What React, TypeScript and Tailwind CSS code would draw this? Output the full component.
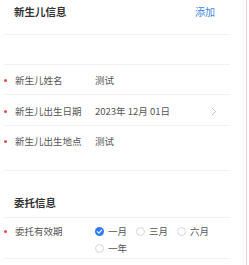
import React from 'react';

const font = { fontFamily: '"Noto Sans CJK SC", "Noto Sans", sans-serif' };

const Divider: React.FC = () => <div className="mx-[4px] w-[226px] h-px bg-[#f1f1f1]" />;

const Row: React.FC<{ label: string; children: React.ReactNode; className?: string }> = ({ label, children, className }) => (
  <div className={`flex items-start ${className ?? ''}`}>
    <span className="w-[15px] h-[14px] pl-[4px] flex items-center">
      <span className="w-[3px] h-[3px] rounded-full bg-[#e5484d]" />
    </span>
    <span className="w-[80px] text-[9.5px] leading-[14px] text-[#555]">{label}</span>
    {children}
  </div>
);

const Radio: React.FC<{ label: string; checked?: boolean }> = ({ label, checked }) => (
  <div className="flex items-center gap-[4px] w-[41px]">
    {checked ? (
      <svg width="9" height="9" viewBox="0 0 10 10">
        <circle cx="5" cy="5" r="5" fill="#2f7cf6" />
        <path d="M2.6 5.2 L4.3 6.8 L7.4 3.5" stroke="#fff" strokeWidth="1.3" fill="none" strokeLinecap="round" strokeLinejoin="round" />
      </svg>
    ) : (
      <span className="w-[9px] h-[9px] rounded-full border border-[#d6d6d6]" />
    )}
    <span className="text-[9.5px] leading-[14px] text-[#555]">{label}</span>
  </div>
);

const App: React.FC = () => {
  return (
    <div className="w-[249px] h-[265px] bg-white flex overflow-hidden" style={font}>
      <div className="w-[246px] flex flex-col">
        <div className="h-[34px] flex justify-between items-start pt-[5px] pl-[14px] pr-[31px]">
          <span className="text-[10.5px] leading-[14px] font-bold text-[#333]">新生儿信息</span>
          <span className="text-[10px] leading-[14px] text-[#3a86e8]">添加</span>
        </div>
        <Divider />
        <div className="h-[29px]" />
        <Divider />
        <Row label="新生儿姓名" className="h-[29px] pt-[8px]">
          <span className="text-[9.5px] leading-[14px] text-[#555]">测试</span>
        </Row>
        <Divider />
        <Row label="新生儿出生日期" className="h-[30px] pt-[9px]">
          <span className="text-[9.5px] leading-[14px] text-[#555] flex-1">2023年 12月 01日</span>
          <svg width="6" height="9" viewBox="0 0 6 9" className="mt-[3px] mr-[29px]">
            <path d="M1 1 L4.5 4.5 L1 8" stroke="#bbb" strokeWidth="0.9" fill="none" />
          </svg>
        </Row>
        <Divider />
        <Row label="新生儿出生地点" className="h-[44px] pt-[8px]">
          <span className="text-[9.5px] leading-[14px] text-[#555]">测试</span>
        </Row>
        <Divider />
        <div className="h-[46px] pl-[14px] pt-[17px]">
          <span className="text-[10.5px] leading-[14px] font-bold text-[#333]">委托信息</span>
        </div>
        <Divider />
        <Row label="委托有效期" className="h-[40px] pt-[6px]">
          <div className="flex flex-wrap w-[135px] gap-y-[3px]">
            <Radio label="一月" checked />
            <Radio label="三月" />
            <Radio label="六月" />
            <Radio label="一年" />
          </div>
        </Row>
        <Divider />
      </div>
      <div className="w-px h-full bg-[#f6c9c9]" />
      <div className="w-[2px]" />
    </div>
  );
};

export default App;
